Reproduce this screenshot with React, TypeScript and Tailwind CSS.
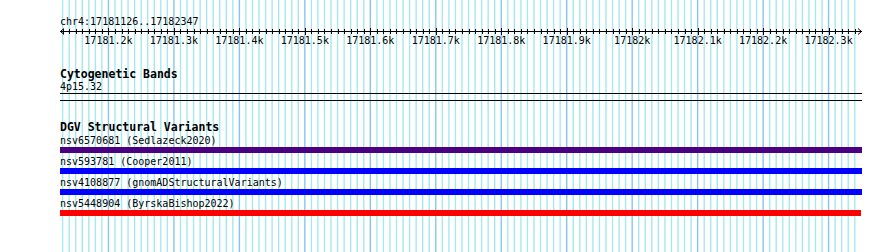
import React from "react";

const START = 17181126;
const END = 17182347;
const LEFT = 60;
const WIDTH = 800;
const toX = (p: number) => LEFT + ((p - START) * WIDTH) / (END - START + 1);

const ticks: number[] = [];
for (let p = 17181130; p <= END; p += 10) ticks.push(p);

const variants = [
  { id: "nsv6570681", src: "Sedlazeck2020", color: "bg-[#4b0082]", w: "w-[802px]" },
  { id: "nsv593781", src: "Cooper2011", color: "bg-[#0000ff]", w: "w-[802px]" },
  { id: "nsv4108877", src: "gnomADStructuralVariants", color: "bg-[#0000ff]", w: "w-[802px]" },
  { id: "nsv5448904", src: "ByrskaBishop2022", color: "bg-[#ff0000]", w: "w-[801px]" },
];

const Grid = () => (
  <svg className="absolute inset-0" width={890} height={252}>
    {ticks.map((p) => {
      const major = p % 100 === 0;
      return (
        <line
          key={p}
          x1={toX(p)}
          x2={toX(p)}
          y1={0}
          y2={252}
          stroke={major ? "#86c6e8" : "#a6e8ee"}
          strokeWidth={1.4}
        />
      );
    })}
  </svg>
);

const Ruler = () => (
  <svg width={810} height={25} className="block -ml-[60px] w-[870px]" viewBox="0 0 870 25">
    <line x1={60} x2={862} y1={3.5} y2={3.5} stroke="#000" strokeWidth={1} />
    <polyline points="64,0.5 60.5,3.5 64,6.5" fill="none" stroke="#000" />
    <polyline points="858,0.5 861.5,3.5 858,6.5" fill="none" stroke="#000" />
    {ticks.map((p) => {
      const major = p % 100 === 0;
      const x = Math.round(toX(p)) + 0.5;
      return (
        <line key={p} x1={x} x2={x} y1={major ? 0 : 1} y2={major ? 7 : 6} stroke="#000" strokeWidth={1} />
      );
    })}
    {ticks
      .filter((p) => p % 100 === 0)
      .map((p) => {
        const k = p / 1000;
        const label = (Number.isInteger(k) ? k.toString() : k.toFixed(1)) + "k";
        return (
          <text
            key={p}
            x={toX(p)}
            y={15.5}
            textAnchor="middle"
            fontFamily="'DejaVu Sans Mono', monospace"
            fontSize={10}
            fill="#000"
          >
            {label}
          </text>
        );
      })}
  </svg>
);

const TrackTitle = ({ children }: { children: React.ReactNode }) => (
  <div className="h-[13px] text-[11.5px] leading-[13px] font-bold whitespace-nowrap">{children}</div>
);

export default function App() {
  return (
    <div className="relative w-[890px] h-[252px] overflow-hidden bg-white text-black font-['DejaVu_Sans_Mono',monospace]">
      <Grid />
      <div className="relative flex flex-col pl-[60px] pt-[15px]">
        <div className="h-[13px] text-[10px] leading-[13px] whitespace-nowrap">chr4:17181126..17182347</div>
        <Ruler />

        <div className="mt-[15px] flex flex-col">
          <div className="h-[12px] text-[11.5px] leading-[13px] font-bold whitespace-nowrap">Cytogenetic Bands</div>
          <div className="h-[13px] text-[10px] leading-[13px] whitespace-nowrap">4p15.32</div>
          <div className="h-px w-[802px] bg-black" />
          <div className="h-px w-[802px] bg-black mt-[6px]" />
        </div>

        <div className="mt-[20px] flex flex-col">
          <TrackTitle>DGV Structural Variants</TrackTitle>
          <div className="flex flex-col gap-[2px]">
            {variants.map((v) => (
              <div key={v.id} className="flex flex-col">
                <div className="h-[13px] text-[10px] leading-[13px] whitespace-nowrap">
                  {v.id} ({v.src})
                </div>
                <div className={`h-[6px] ${v.w} ${v.color}`} />
              </div>
            ))}
          </div>
        </div>
      </div>
    </div>
  );
}
